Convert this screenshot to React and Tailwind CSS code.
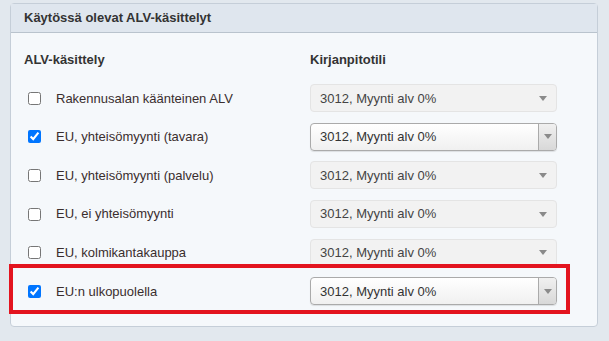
import React from 'react';

const ROWS = [
  { label: 'Rakennusalan käänteinen ALV', checked: false },
  { label: 'EU, yhteisömyynti (tavara)', checked: true },
  { label: 'EU, yhteisömyynti (palvelu)', checked: false },
  { label: 'EU, ei yhteisömyynti', checked: false },
  { label: 'EU, kolmikantakauppa', checked: false },
  { label: 'EU:n ulkopuolella', checked: true, highlight: true },
];

function Arrow() {
  return (
    <svg width="8" height="5" viewBox="0 0 8 5" className="block">
      <path d="M0 0h8L4 5z" fill="#8a8a8a" />
    </svg>
  );
}

function AccountSelect({ enabled }) {
  if (!enabled) {
    return (
      <div className="flex h-[28px] w-[247px] items-center justify-between rounded-[4px] border border-[#e4e4e4] bg-[#f2f2f2] pl-[9px] pr-[9px] text-[#444]">
        <span>3012, Myynti alv 0%</span>
        <Arrow />
      </div>
    );
  }
  return (
    <div className="flex h-[28px] w-[247px] items-stretch overflow-hidden rounded-[4px] border border-[#aaa] bg-gradient-to-b from-white to-[#f0f0f0] shadow-[0_1px_1px_rgba(0,0,0,0.1)]">
      <span className="flex flex-1 items-center pl-[9px] text-[#333]">3012, Myynti alv 0%</span>
      <span className="flex w-[18px] items-center justify-center border-l border-[#aaa] bg-gradient-to-b from-[#f0f0f0] to-[#d8d8d8]">
        <Arrow />
      </span>
    </div>
  );
}

export default function App() {
  return (
    <div className="min-h-[341px] bg-[#e2e8ee] pt-[3px] pl-[10px] text-[13px] text-[#333]" style={{ fontFamily: '"Liberation Sans", Arial, sans-serif' }}>
      <div className="w-[588px] rounded-[4px] border border-[#c5ced8] bg-[#f5f8fb]">
        <div className="flex h-[29px] items-center border-b border-[#b9c3cd] bg-[#dfe6ee] pl-[13px] font-bold text-[#333]">
          Käytössä olevat ALV-käsittelyt
        </div>
        <div className="pb-[15px]">
          <div className="flex h-[46px] items-center pt-[7px] font-bold">
            <div className="w-[299px] pl-[13px]">ALV-käsittely</div>
            <div>Kirjanpitotili</div>
          </div>
          <div className="flex flex-col">
            {ROWS.map((row, i) => (
              <div key={i} className="relative flex h-[38.6px] items-center">
                <div className="flex w-[299px] items-center">
                  <input
                    type="checkbox"
                    checked={row.checked}
                    readOnly
                    className="ml-[17px] mr-[15px] h-[13px] w-[13px] accent-[#0075ff]"
                  />
                  <span className="text-[#3a2e2e]">{row.label}</span>
                </div>
                <AccountSelect enabled={row.checked} />
                {row.highlight && (
                  <div className="pointer-events-none absolute left-[-2px] top-[-8px] h-[50px] w-[561px] border-[4px] border-[#e3141f]" />
                )}
              </div>
            ))}
          </div>
        </div>
      </div>
    </div>
  );
}
